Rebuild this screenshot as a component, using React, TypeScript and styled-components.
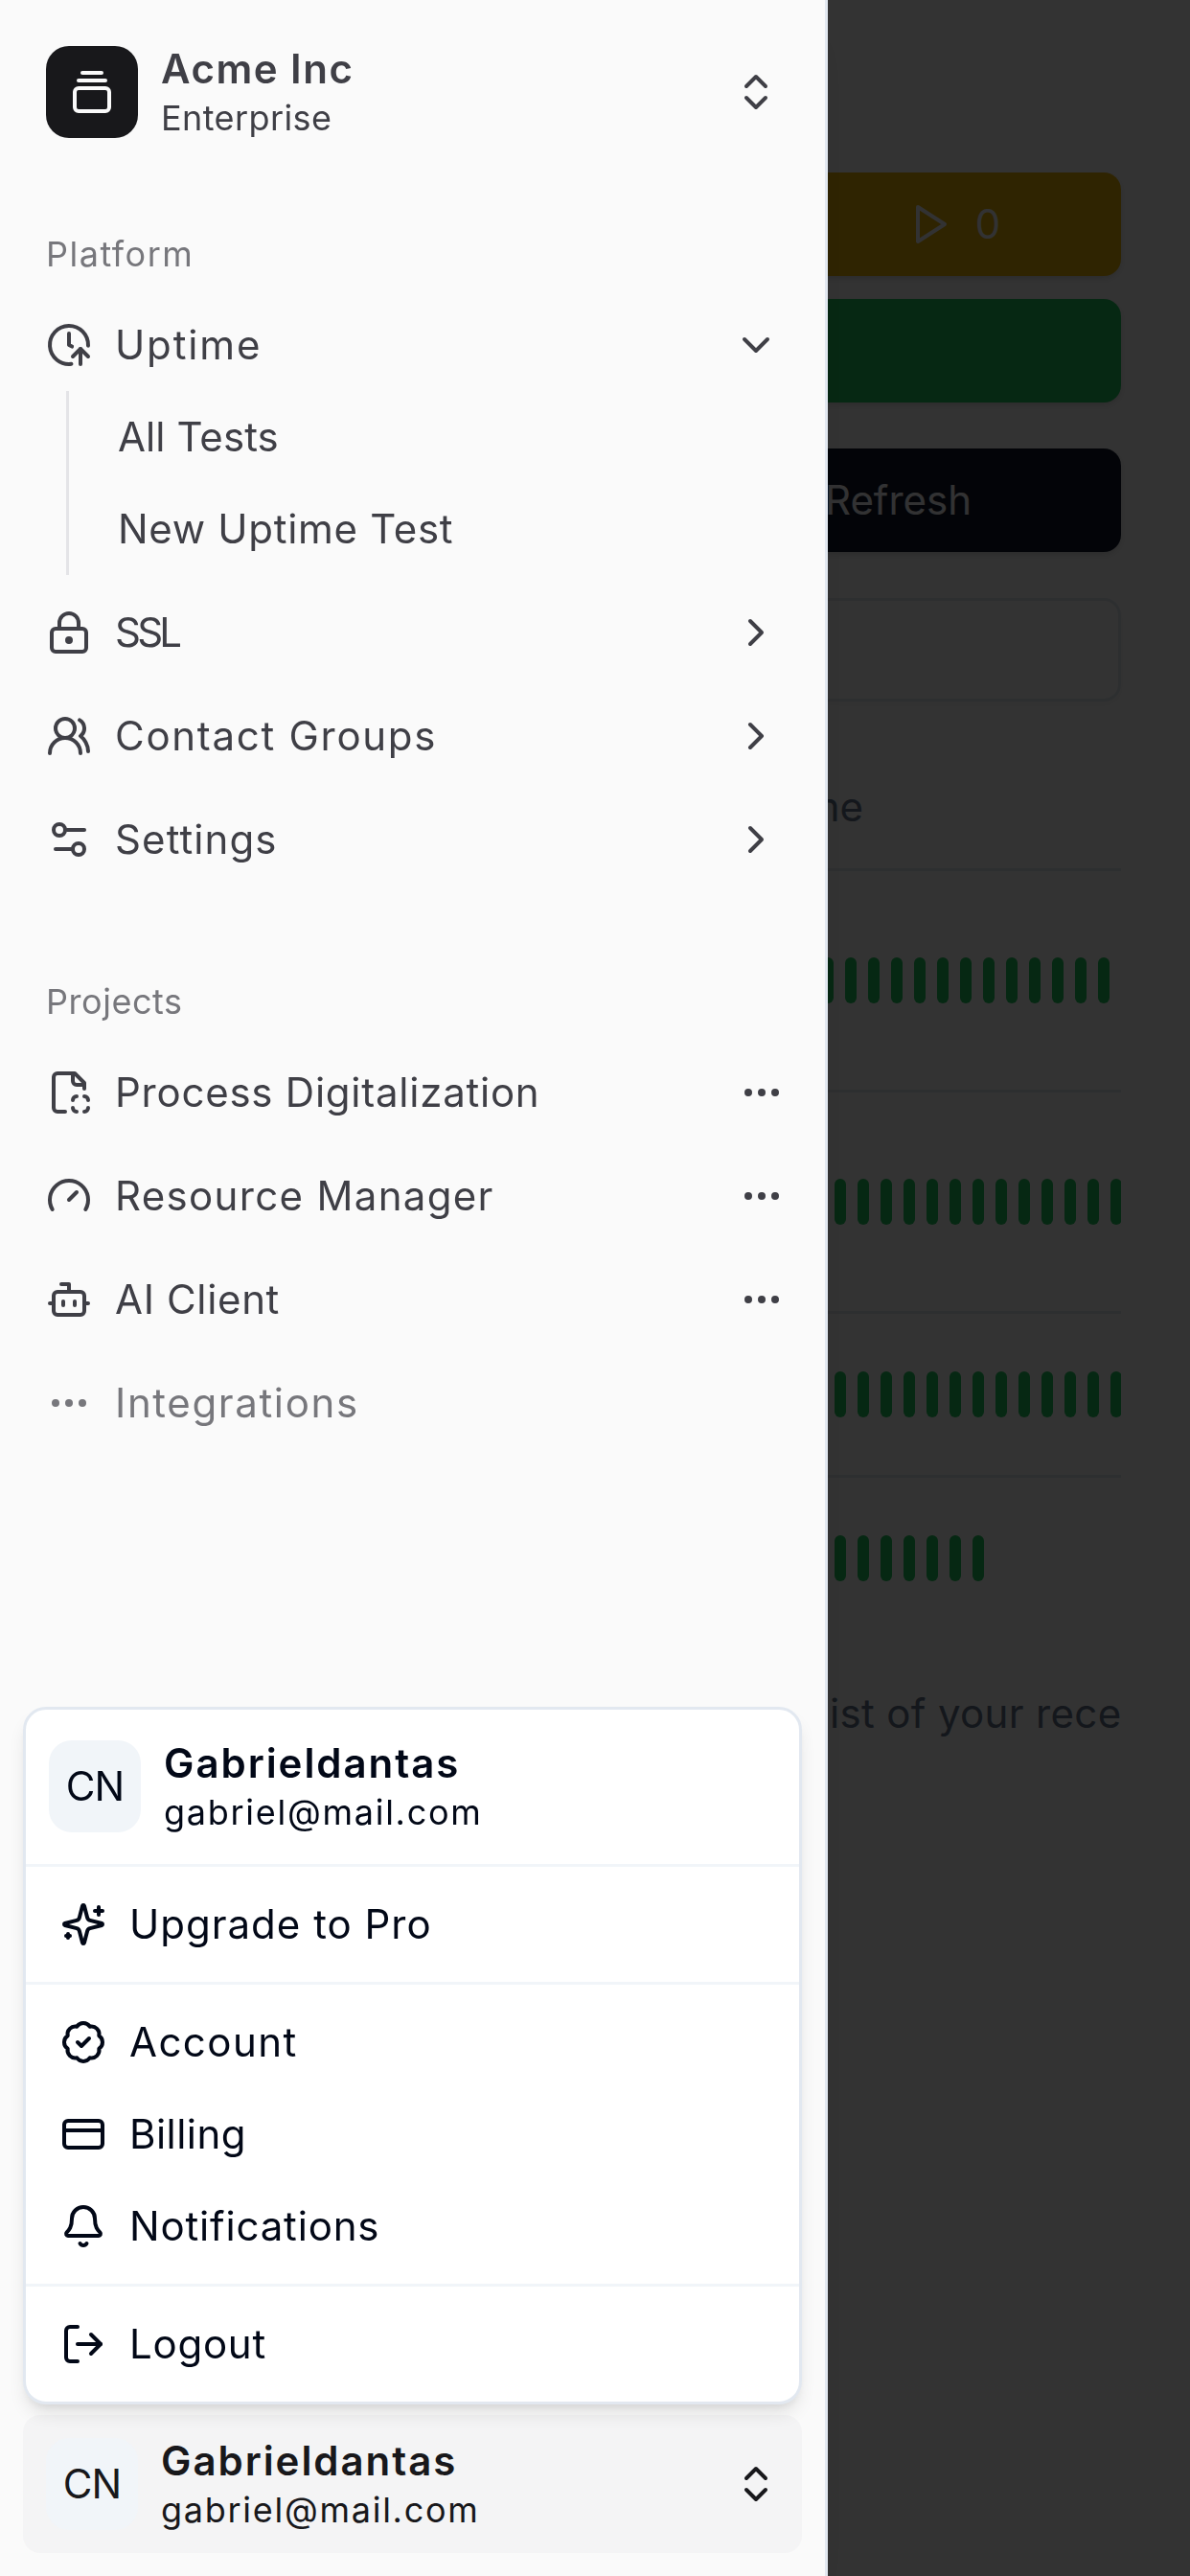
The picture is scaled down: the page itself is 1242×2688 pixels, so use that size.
import React from "react";
import styled, { createGlobalStyle } from "styled-components";
import {
  BadgeCheck,
  Bell,
  Bot,
  ChevronDown,
  ChevronRight,
  ChevronsUpDown,
  ClockArrowUp,
  CreditCard,
  Ellipsis,
  GalleryVerticalEnd,
  Gauge,
  LockKeyhole,
  LogOut,
  RefreshCw,
  UsersRound,
} from "lucide-react";

const GlobalStyle = createGlobalStyle`
  *, *::before, *::after { box-sizing: border-box; }
  html, body { margin: 0; padding: 0; background: #ffffff; }
  body {
    width: 1242px;
    height: 2688px;
    overflow: hidden;
    font-family: Inter, "Open Sans", "Liberation Sans", sans-serif;
    font-size: 42px;
    line-height: 60px;
    color: #020817;
  }
  svg { display: block; flex: none; }
`;

/* ---------- icons ---------- */

const Glyph = ({ children }: { children: React.ReactNode }) => (
  <svg
    width="48"
    height="48"
    viewBox="0 0 24 24"
    fill="none"
    stroke="currentColor"
    strokeWidth="2"
    strokeLinecap="round"
    strokeLinejoin="round"
  >
    {children}
  </svg>
);

const SlidersIcon = () => (
  <Glyph>
    <path d="M20 7h-9" />
    <path d="M14 17H5" />
    <circle cx="17" cy="17" r="3" />
    <circle cx="7" cy="7" r="3" />
  </Glyph>
);

const FileScanIcon = () => (
  <Glyph>
    <path d="M20 10V7l-5-5H6a2 2 0 0 0-2 2v16a2 2 0 0 0 2 2h4" />
    <path d="M14 2v4a2 2 0 0 0 2 2h4" />
    <path d="M16 14a2 2 0 0 0-2 2" />
    <path d="M20 14a2 2 0 0 1 2 2" />
    <path d="M20 22a2 2 0 0 0 2-2" />
    <path d="M16 22a2 2 0 0 1-2-2" />
  </Glyph>
);

const PlayIcon = () => (
  <Glyph>
    <polygon points="6 3 20 12 6 21 6 3" />
  </Glyph>
);

const SparklesIcon = () => (
  <Glyph>
    <path d="M9.937 15.5A2 2 0 0 0 8.5 14.063l-6.135-1.582a.5.5 0 0 1 0-.962L8.5 9.936A2 2 0 0 0 9.937 8.5l1.582-6.135a.5.5 0 0 1 .963 0L14.063 8.5A2 2 0 0 0 15.5 9.937l6.135 1.581a.5.5 0 0 1 0 .964L15.5 14.063a2 2 0 0 0-1.437 1.437l-1.582 6.135a.5.5 0 0 1-.963 0z" />
    <path d="M20 3v4" />
    <path d="M22 5h-4" />
    <path d="M4 17v2" />
    <path d="M5 18H3" />
  </Glyph>
);

/* ---------- shared text ---------- */

const Label = styled.span<{ $track?: number }>`
  white-space: nowrap;
  letter-spacing: ${(p) => p.$track ?? 0}px;
`;

/* ---------- dashboard page ---------- */

const Dashboard = styled.main`
  display: flex;
  flex-direction: column;
  width: 1242px;
  height: 2688px;
  padding: 180px 72px 0;
`;

const Stats = styled.div`
  display: grid;
  grid-template-columns: repeat(3, 1fr);
  gap: 24px;
`;

const Tile = styled.div<{ $color: string; $wide?: boolean }>`
  display: flex;
  align-items: center;
  justify-content: center;
  gap: 24px;
  height: 108px;
  border-radius: 18px;
  background: ${(p) => p.$color};
  color: #f8fafc;
  box-shadow: 0 3px 9px rgba(0, 0, 0, 0.1), 0 3px 6px -3px rgba(0, 0, 0, 0.1);
  grid-column: ${(p) => (p.$wide ? "1 / -1" : "auto")};
`;

const Actions = styled.div`
  display: grid;
  grid-template-columns: repeat(2, 1fr);
  gap: 24px;
  margin-top: 48px;
`;

const SearchField = styled.div`
  height: 108px;
  margin-top: 48px;
  border: 3px solid #e2e8f0;
  border-radius: 18px;
  box-shadow: 0 3px 6px rgba(0, 0, 0, 0.05);
`;

const Table = styled.section`
  display: flex;
  flex-direction: column;
  margin-top: 54px;
`;

const TableRow = styled.div<{ $height: number; $last?: boolean }>`
  display: grid;
  grid-template-columns: 1fr 312px;
  align-items: center;
  height: ${(p) => p.$height}px;
  border-bottom: ${(p) => (p.$last ? "0" : "3px solid #e2e8f0")};
`;

const HeadCell = styled.div`
  grid-column: 1 / -1;
  width: 829px;
  padding-bottom: 8px;
  text-align: right;
  color: #64748b;
`;

const BarStrip = styled.div<{ $inset: number }>`
  grid-column: 2;
  display: flex;
  gap: 12px;
  overflow: hidden;
  padding-left: ${(p) => p.$inset}px;
`;

const Bar = styled.i`
  flex: none;
  width: 12px;
  height: 48px;
  border-radius: 6px;
  background: #22c55e;
`;

const Caption = styled.div`
  margin-top: 48px;
  padding-left: 794px;
  color: #64748b;
`;

/* ---------- sheet ---------- */

const Overlay = styled.div`
  position: fixed;
  inset: 0;
  background: rgba(0, 0, 0, 0.8);
`;

const Sheet = styled.aside`
  position: fixed;
  inset: 0 auto 0 0;
  display: flex;
  flex-direction: column;
  width: 864px;
  border-right: 3px solid #e2e8f0;
  background: #fafafa;
  color: #3f3f46;
  box-shadow: 0 30px 45px -9px rgba(0, 0, 0, 0.1),
    0 12px 18px -12px rgba(0, 0, 0, 0.1);
`;

const SheetHeader = styled.header`
  padding: 24px;
`;

const SheetFooter = styled.footer`
  position: relative;
  margin-top: auto;
  padding: 24px;
`;

const AccountButton = styled.div<{ $active?: boolean }>`
  display: flex;
  align-items: center;
  gap: 24px;
  height: 144px;
  padding: 0 24px;
  border-radius: 18px;
  background: ${(p) => (p.$active ? "#f4f4f5" : "transparent")};
  color: ${(p) => (p.$active ? "#18181b" : "inherit")};

  > svg { margin-left: auto; }
`;

const Badge = styled.div<{ $dark?: boolean }>`
  display: flex;
  flex: none;
  align-items: center;
  justify-content: center;
  width: 96px;
  height: 96px;
  border-radius: 24px;
  background: ${(p) => (p.$dark ? "#18181b" : "#f1f5f9")};
  color: ${(p) => (p.$dark ? "#fafafa" : "inherit")};
`;

const Lines = styled.div`
  display: flex;
  flex-direction: column;
`;

const Title = styled(Label)`
  font-weight: 600;
  line-height: 52.5px;
`;

const Subtitle = styled(Label)`
  margin-bottom: -1px;
  padding-top: 1px;
  font-size: 36px;
  line-height: 48px;
`;

const Group = styled.nav`
  display: flex;
  flex-direction: column;
  padding: 24px;
  & + & { margin-top: 24px; }
`;

const GroupLabel = styled.div`
  display: flex;
  align-items: center;
  height: 96px;
  padding: 2px 24px 0;
  font-size: 36px;
  color: rgba(63, 63, 70, 0.7);
`;

const Menu = styled.div`
  display: flex;
  flex-direction: column;
  gap: 12px;
`;

const Row = styled.div<{ $muted?: boolean; $action?: boolean }>`
  display: flex;
  align-items: center;
  gap: 24px;
  height: 96px;
  padding: 0 ${(p) => (p.$action ? 18 : 24)}px 0 24px;
  color: ${(p) => (p.$muted ? "rgba(63, 63, 70, 0.7)" : "inherit")};

  > svg:nth-child(3) { margin-left: auto; }
`;

const SubMenu = styled.div`
  display: flex;
  flex-direction: column;
  gap: 12px;
  margin: -12px 0 0 45px;
  padding: 6px 0 6px 51px;
  border-left: 3px solid #e4e4e7;
`;

const SubRow = styled.div`
  display: flex;
  align-items: center;
  height: 84px;
`;

/* ---------- account dropdown ---------- */

const Dropdown = styled.div`
  position: absolute;
  left: 24px;
  bottom: 179.25px;
  display: flex;
  flex-direction: column;
  width: 813px;
  padding: 12px;
  border: 3px solid #e2e8f0;
  border-radius: 24px;
  background: #ffffff;
  color: #020817;
  box-shadow: 0 12px 18px -3px rgba(0, 0, 0, 0.1),
    0 6px 12px -6px rgba(0, 0, 0, 0.1);
`;

const DropdownUser = styled.div`
  display: flex;
  align-items: center;
  gap: 24px;
  padding: 17.5px 12px 18.5px;
`;

const DropdownItem = styled.div`
  display: flex;
  align-items: center;
  gap: 24px;
  height: 96px;
  padding: 0 24px;
`;

const Separator = styled.hr`
  width: calc(100% + 24px);
  height: 3px;
  margin: 12px -12px;
  border: 0;
  background: #f1f5f9;
`;

const bars = (count: number) =>
  Array.from({ length: count }, (_, i) => <Bar key={i} />);

const User = () => (
  <>
    <Badge>
      <Label $track={-0.8}>CN</Label>
    </Badge>
    <Lines>
      <Title $track={1.95}>Gabrieldantas</Title>
      <Subtitle $track={1.73}>gabriel@mail.com</Subtitle>
    </Lines>
  </>
);

export default function App() {
  return (
    <>
      <GlobalStyle />
      <Dashboard>
        <Stats>
          <Tile $color="#22c55e" />
          <Tile $color="#ef4444" />
          <Tile $color="#eab308">
            <PlayIcon />
            <Label>0</Label>
          </Tile>
          <Tile $color="#22c55e" $wide />
        </Stats>
        <Actions>
          <Tile $color="#0f172a" />
          <Tile $color="#0f172a">
            <RefreshCw size={48} />
            <Label>Refresh</Label>
          </Tile>
        </Actions>
        <SearchField />
        <Table>
          <TableRow $height={123}>
            <HeadCell>Uptime</HeadCell>
          </TableRow>
          <TableRow $height={231}>
            <BarStrip $inset={0}>{bars(13)}</BarStrip>
          </TableRow>
          <TableRow $height={231}>
            <BarStrip $inset={13}>{bars(13)}</BarStrip>
          </TableRow>
          <TableRow $height={171}>
            <BarStrip $inset={13}>{bars(13)}</BarStrip>
          </TableRow>
          <TableRow $height={168} $last>
            <BarStrip $inset={13}>{bars(7)}</BarStrip>
          </TableRow>
        </Table>
        <Caption>
          <Label $track={0.35}>ist of your rece</Label>
        </Caption>
      </Dashboard>

      <Overlay />

      <Sheet>
        <SheetHeader>
          <AccountButton>
            <Badge $dark>
              <GalleryVerticalEnd size={48} />
            </Badge>
            <Lines>
              <Title $track={1.5}>Acme Inc</Title>
              <Subtitle $track={0.4}>Enterprise</Subtitle>
            </Lines>
            <ChevronsUpDown size={48} />
          </AccountButton>
        </SheetHeader>

        <Group>
          <GroupLabel>
            <Label $track={1.5}>Platform</Label>
          </GroupLabel>
          <Menu>
            <Row>
              <ClockArrowUp size={48} />
              <Label $track={1.85}>Uptime</Label>
              <ChevronDown size={48} />
            </Row>
            <SubMenu>
              <SubRow>
                <Label $track={0.08}>All Tests</Label>
              </SubRow>
              <SubRow>
                <Label $track={0.7}>New Uptime Test</Label>
              </SubRow>
            </SubMenu>
            <Row>
              <LockKeyhole size={48} />
              <Label $track={-3.8}>SSL</Label>
              <ChevronRight size={48} />
            </Row>
            <Row>
              <UsersRound size={48} />
              <Label $track={1.72}>Contact Groups</Label>
              <ChevronRight size={48} />
            </Row>
            <Row>
              <SlidersIcon />
              <Label $track={1.1}>Settings</Label>
              <ChevronRight size={48} />
            </Row>
          </Menu>
        </Group>

        <Group>
          <GroupLabel>
            <Label $track={0.55}>Projects</Label>
          </GroupLabel>
          <Menu>
            <Row $action>
              <FileScanIcon />
              <Label $track={0.76}>Process Digitalization</Label>
              <Ellipsis size={48} />
            </Row>
            <Row $action>
              <Gauge size={48} />
              <Label $track={1.33}>Resource Manager</Label>
              <Ellipsis size={48} />
            </Row>
            <Row $action>
              <Bot size={48} />
              <Label $track={0.65}>AI Client</Label>
              <Ellipsis size={48} />
            </Row>
            <Row $muted>
              <Ellipsis size={48} />
              <Label $track={1.63}>Integrations</Label>
            </Row>
          </Menu>
        </Group>

        <SheetFooter>
          <AccountButton $active>
            <User />
            <ChevronsUpDown size={48} />
          </AccountButton>
          <Dropdown>
            <DropdownUser>
              <User />
            </DropdownUser>
            <Separator />
            <DropdownItem>
              <SparklesIcon />
              <Label $track={1}>Upgrade to Pro</Label>
            </DropdownItem>
            <Separator />
            <DropdownItem>
              <BadgeCheck size={48} />
              <Label $track={1.45}>Account</Label>
            </DropdownItem>
            <DropdownItem>
              <CreditCard size={48} />
              <Label $track={0.45}>Billing</Label>
            </DropdownItem>
            <DropdownItem>
              <Bell size={48} />
              <Label $track={0.83}>Notifications</Label>
            </DropdownItem>
            <Separator />
            <DropdownItem>
              <LogOut size={48} />
              <Label $track={0.74}>Logout</Label>
            </DropdownItem>
          </Dropdown>
        </SheetFooter>
      </Sheet>
    </>
  );
}
